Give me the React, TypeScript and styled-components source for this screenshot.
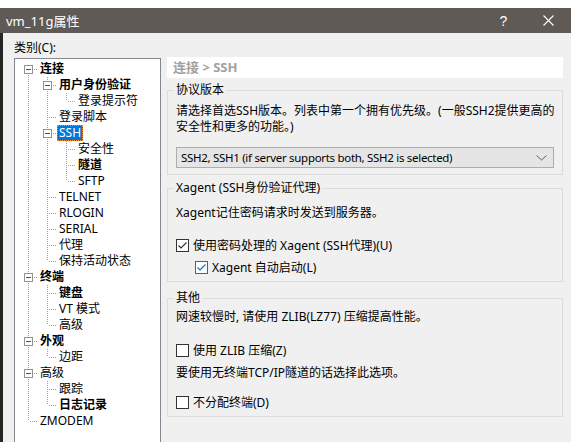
import React from 'react'
import { styled, css, createGlobalStyle } from 'styled-components'

type Node = {
  label: string;
  bold?: boolean;
  selected?: boolean;
  children?: Node[];
}

type GuideKind = 'blank' | 'pipe' | 'tee' | 'corner' | 'start';

type FlatRow = {
  node: Node;
  guides: GuideKind[];
}

const tree: Node[] = [
  {
    label: '连接', bold: true, children: [
      { label: '用户身份验证', bold: true, children: [{ label: '登录提示符' }] },
      { label: '登录脚本' },
      { label: 'SSH', selected: true, children: [{ label: '安全性' }, { label: '隧道', bold: true }, { label: 'SFTP' }] },
      { label: 'TELNET' },
      { label: 'RLOGIN' },
      { label: 'SERIAL' },
      { label: '代理' },
      { label: '保持活动状态' },
    ]
  },
  { label: '终端', bold: true, children: [{ label: '键盘', bold: true }, { label: 'VT 模式' }, { label: '高级' }] },
  { label: '外观', bold: true, children: [{ label: '边距' }] },
  { label: '高级', children: [{ label: '跟踪' }, { label: '日志记录', bold: true }] },
  { label: 'ZMODEM' },
]

// turn the tree into rows, each with the connector cells in front of it
const flatten = (nodes: Node[], parents: boolean[] = [], out: FlatRow[] = []) => {
  nodes.forEach((node, i) => {
    const isLast = i === nodes.length - 1;
    const isFirstRoot = parents.length === 0 && i === 0;
    const own: GuideKind = isFirstRoot ? 'start' : isLast ? 'corner' : 'tee';
    const guides: GuideKind[] = [...parents.map(last => (last ? 'blank' : 'pipe') as GuideKind), own];
    out.push({ node, guides });
    if (node.children) flatten(node.children, [...parents, isLast], out);
  });
  return out;
}

const rows = flatten(tree);

export default function App() {
  return (
    <>
      <GlobalStyle />
      <Page>
        <Window>
          <TitleBar>
            <Title>vm_11g属性</Title>
            <TitleButtons>
              <TitleButton>?</TitleButton>
              <TitleButton>
                <svg width="11" height="11" viewBox="0 0 11 11">
                  <path d="M0.5 0.5 L10.5 10.5 M10.5 0.5 L0.5 10.5" stroke="#fff" strokeWidth="1.1" />
                </svg>
              </TitleButton>
            </TitleButtons>
          </TitleBar>
          <Body>
            <LeftCol>
              <CategoryLabel>类别(C):</CategoryLabel>
              <TreePanel>
                {rows.map((r, i) => (
                  <TreeRow key={i}>
                    {r.guides.map((g, j) => (
                      <Guide key={j} $kind={g}>
                        {j === r.guides.length - 1 && r.node.children && (
                          <Expander><ExpanderMinus /></Expander>
                        )}
                      </Guide>
                    ))}
                    <TreeLabel $bold={r.node.bold} $selected={r.node.selected}>{r.node.label}</TreeLabel>
                  </TreeRow>
                ))}
              </TreePanel>
            </LeftCol>
            <RightCol>
              <Header>连接 &gt; SSH</Header>

              <Group $top={4}>
                <Legend>协议版本</Legend>
                <Text $top={5}>请选择首选SSH版本。列表中第一个拥有优先级。(一般SSH2提供更高的<br />安全性和更多的功能。)</Text>
                <Select>
                  <SelectValue>SSH2, SSH1 (if server supports both, SSH2 is selected)</SelectValue>
                  <svg width="11" height="6" viewBox="0 0 11 6">
                    <polyline points="0.5,0.5 5.5,5 10.5,0.5" fill="none" stroke="#606060" strokeWidth="1" />
                  </svg>
                </Select>
              </Group>

              <Group $top={5}>
                <Legend>Xagent (SSH身份验证代理)</Legend>
                <Text $top={9}>Xagent记住密码请求时发送到服务器。</Text>
                <CheckRow $top={16}>
                  <CheckBox $checked />
                  <span>使用密码处理的 Xagent (SSH代理)(U)</span>
                </CheckRow>
                <CheckRow $top={6} $indent={19}>
                  <CheckBox $checked $focus />
                  <span>Xagent 自动启动(L)</span>
                </CheckRow>
              </Group>

              <Group $top={8}>
                <Legend>其他</Legend>
                <Text $top={3}>网速较慢时, 请使用 ZLIB(LZ77) 压缩提高性能。</Text>
                <CheckRow $top={17}>
                  <CheckBox />
                  <span>使用 ZLIB 压缩(Z)</span>
                </CheckRow>
                <Text $top={7}>要使用无终端TCP/IP隧道的话选择此选项。</Text>
                <CheckRow $top={13}>
                  <CheckBox />
                  <span>不分配终端(D)</span>
                </CheckRow>
              </Group>
            </RightCol>
          </Body>
        </Window>
      </Page>
    </>
  )
}

const CheckBox = ({ $checked, $focus }: { $checked?: boolean; $focus?: boolean }) => (
  <Box $focus={$focus}>
    {$checked && (
      <svg width="11" height="11" viewBox="0 0 11 11">
        <polyline points="1.5,5.5 4,8 9.5,2.5" fill="none" stroke={$focus ? '#0078d7' : '#333'} strokeWidth="1.2" />
      </svg>
    )}
  </Box>
)

const GlobalStyle = createGlobalStyle`
  body {
    margin: 0;
    background: #fff;
    font-family: "Noto Sans", "Noto Sans CJK SC", sans-serif;
    font-size: 12px;
    color: #000;
  }
`

const Page = styled.div`
  width: 571px;
  height: 442px;
  padding-top: 8px;
  box-sizing: border-box;
  overflow: hidden;
  background: #fff;
`

const Window = styled.div`
  height: 434px;
  display: flex;
  flex-direction: column;
  background: #f0f0f0;
`

const TitleBar = styled.div`
  height: 25px;
  flex: none;
  display: flex;
  align-items: center;
  background: #5f5a56;
  color: #fff;
`

const Title = styled.div`
  flex: 1;
  padding-left: 6px;
  font-size: 13px;
`

const TitleButtons = styled.div`
  display: flex;
  height: 100%;
`

const TitleButton = styled.div`
  width: 45px;
  height: 100%;
  display: flex;
  align-items: center;
  justify-content: center;
  font-size: 14px;
  font-family: "Liberation Sans", sans-serif;
`

const Body = styled.div`
  flex: 1;
  display: flex;
  align-items: flex-start;
  padding: 7px 0 0 11px;
  border-left: 3px solid #262626;
  overflow: hidden;
`

const LeftCol = styled.div`
  display: flex;
  flex-direction: column;
  gap: 2px;
`

const CategoryLabel = styled.div`
  line-height: 16px;
  height: 16px;
`

const TreePanel = styled.div`
  width: 147px;
  height: 400px;
  box-sizing: border-box;
  background: #fff;
  border: 1px solid #828790;
  padding: 2px 0 0 4px;
`

const TreeRow = styled.div`
  display: flex;
  height: 16px;
  align-items: center;
`

const V = 'repeating-linear-gradient(to bottom, #a0a0a0 0 1px, transparent 1px 2px)';
const H = 'repeating-linear-gradient(to right, #a0a0a0 0 1px, transparent 1px 2px)';

const guideBg: Record<GuideKind, string> = {
  blank: 'none',
  pipe: `${V} 9px 0 / 1px 16px no-repeat`,
  tee: `${V} 9px 0 / 1px 16px no-repeat, ${H} 11px 8px / 8px 1px no-repeat`,
  corner: `${V} 9px 0 / 1px 8px no-repeat, ${H} 11px 8px / 8px 1px no-repeat`,
  start: `${V} 9px 8px / 1px 8px no-repeat, ${H} 11px 8px / 8px 1px no-repeat`,
}

const Guide = styled.span<{ $kind: GuideKind }>`
  flex: none;
  width: 19px;
  height: 16px;
  display: flex;
  align-items: center;
  justify-content: center;
  background: ${({ $kind }) => guideBg[$kind]};
`

const Expander = styled.span`
  width: 9px;
  height: 9px;
  box-sizing: border-box;
  border: 1px solid #919191;
  background: #fff;
  display: flex;
  align-items: center;
  justify-content: center;
`

const ExpanderMinus = styled.span`
  width: 5px;
  height: 1px;
  background: #2a4f8f;
`

const TreeLabel = styled.span<{ $bold?: boolean; $selected?: boolean }>`
  height: 16px;
  line-height: 16px;
  padding: 0 2px;
  white-space: nowrap;
  font-weight: ${({ $bold }) => ($bold ? 700 : 400)};
  ${({ $selected }) => $selected && css`
    background: #0078d7;
    color: #fff;
    outline: 1px dotted #ff8728;
    outline-offset: -1px;
  `}
`

const RightCol = styled.div`
  width: 396px;
  margin: 17px 0 0 6px;
  display: flex;
  flex-direction: column;
`

const Header = styled.div`
  height: 21px;
  line-height: 21px;
  background: #fff;
  padding-left: 6px;
  font-size: 13px;
  font-weight: 700;
  color: #a0a0a0;
`

const Group = styled.fieldset<{ $top: number }>`
  margin: ${({ $top }) => $top}px 0 0 0;
  padding: 0 8px 6px 8px;
  border: 1px solid #dcdcdc;
  min-width: 0;
  display: flex;
  flex-direction: column;
`

const Legend = styled.legend`
  padding: 0 2px;
  margin-left: -2px;
  line-height: 16px;
  height: 16px;
`

const Text = styled.div<{ $top: number }>`
  margin-top: ${({ $top }) => $top}px;
  line-height: 16px;
  white-space: nowrap;
`

const Select = styled.div`
  margin-top: 12px;
  height: 21px;
  box-sizing: border-box;
  border: 1px solid #adadad;
  background: #e5e5e5;
  display: flex;
  align-items: center;
  justify-content: space-between;
  padding: 0 6px 0 4px;
`

const SelectValue = styled.span`
  font-size: 11.5px;
  letter-spacing: -0.3px;
`

const CheckRow = styled.div<{ $top: number; $indent?: number }>`
  margin-top: ${({ $top }) => $top}px;
  margin-left: ${({ $indent }) => $indent ?? 0}px;
  height: 16px;
  display: flex;
  align-items: center;
  gap: 4px;
`

const Box = styled.span<{ $focus?: boolean }>`
  width: 13px;
  height: 13px;
  box-sizing: border-box;
  flex: none;
  border: 1px solid ${({ $focus }) => ($focus ? '#0078d7' : '#333')};
  background: #fff;
  display: flex;
  align-items: center;
  justify-content: center;
`
